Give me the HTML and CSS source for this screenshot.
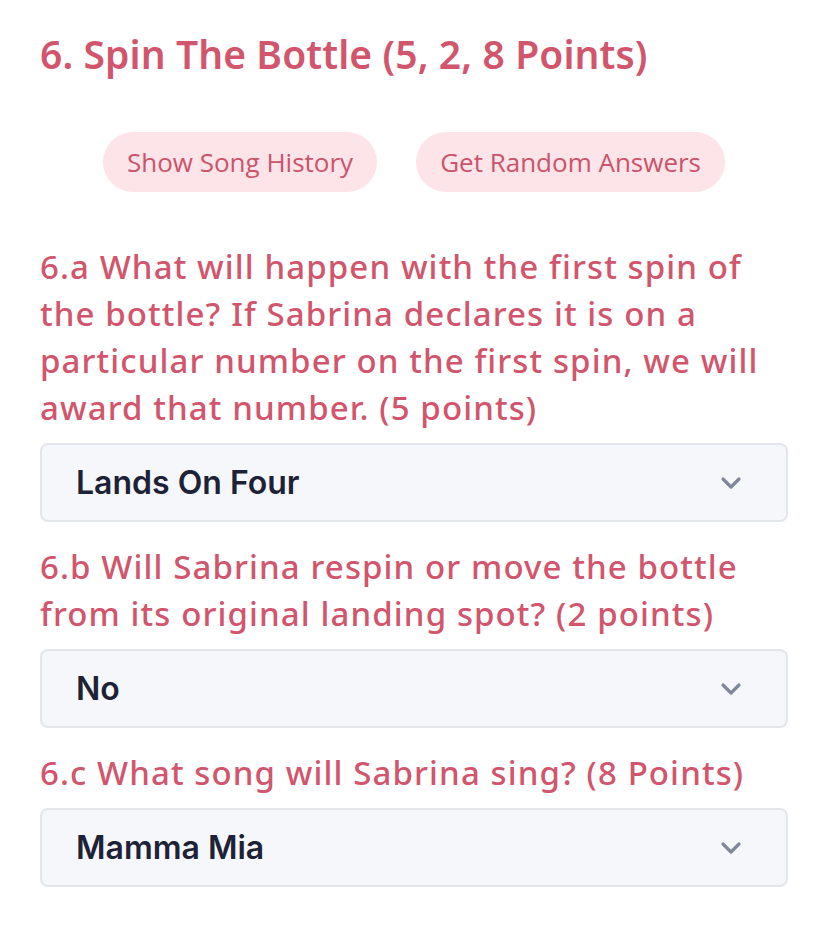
FILE: index.html
```html
<!DOCTYPE html>
<html>
<head>
<meta charset="utf-8">
<link rel="stylesheet" href="styles.css">
</head>
<body>
<main class="page">
  <h1 class="title">6. Spin The Bottle (5, 2, 8 Points)</h1>
  <div class="actions">
    <button class="pill">Show Song History</button>
    <button class="pill">Get Random Answers</button>
  </div>

  <section class="question">
    <p class="q-text">6.a What will happen with the first spin of the bottle? If Sabrina declares it is on a particular number on the first spin, we will award that number. (5 points)</p>
    <div class="select">
      <span class="select-value">Lands On Four</span>
      <svg class="chevron" width="22" height="14" viewBox="0 0 22 14"><path d="M3 3 L11 11 L19 3" fill="none" stroke="#7f8799" stroke-width="3.2" stroke-linecap="round" stroke-linejoin="round"/></svg>
    </div>
  </section>

  <section class="question">
    <p class="q-text">6.b Will Sabrina respin or move the bottle from its original landing spot? (2 points)</p>
    <div class="select">
      <span class="select-value">No</span>
      <svg class="chevron" width="22" height="14" viewBox="0 0 22 14"><path d="M3 3 L11 11 L19 3" fill="none" stroke="#7f8799" stroke-width="3.2" stroke-linecap="round" stroke-linejoin="round"/></svg>
    </div>
  </section>

  <section class="question">
    <p class="q-text">6.c What song will Sabrina sing? (8 Points)</p>
    <div class="select">
      <span class="select-value">Mamma Mia</span>
      <svg class="chevron" width="22" height="14" viewBox="0 0 22 14"><path d="M3 3 L11 11 L19 3" fill="none" stroke="#7f8799" stroke-width="3.2" stroke-linecap="round" stroke-linejoin="round"/></svg>
    </div>
  </section>
</main>
</body>
</html>
```

FILE: styles.css
```css
html, body {
  margin: 0;
  padding: 0;
  background: #ffffff;
}

.page {
  padding: 27px 40px 0 40px;
  font-family: "Noto Sans", "Open Sans", sans-serif;
}

.title {
  margin: 0;
  font-family: "Noto Sans", sans-serif;
  font-weight: 600;
  font-size: 39px;
  line-height: 54px;
  letter-spacing: 0.1px;
  color: #d1566d;
}

.actions {
  display: flex;
  justify-content: center;
  gap: 39px;
  margin-top: 51px;
}

.pill {
  height: 60px;
  padding: 0 24px;
  border: none;
  border-radius: 30px;
  background: #fde4e8;
  color: #c9546b;
  font-family: "Open Sans", sans-serif;
  font-size: 26px;
  font-weight: 400;
}

.actions + .question {
  margin-top: 51px;
}

.q-text {
  margin: 0 0 12px 0;
  font-family: "Noto Sans", sans-serif;
  font-weight: 500;
  font-size: 33px;
  line-height: 47px;
  letter-spacing: 1.1px;
  color: #d1566d;
}

.select {
  display: flex;
  align-items: center;
  justify-content: space-between;
  height: 75px;
  padding: 0 44px 0 34px;
  border: 2px solid #e3e6eb;
  border-radius: 8px;
  background: #f6f7fb;
  margin-bottom: 21px;
}

.select-value {
  font-family: Inter, sans-serif;
  font-weight: 600;
  font-size: 32px;
  color: #1e2236;
}

.chevron {
  display: block;
}
```
